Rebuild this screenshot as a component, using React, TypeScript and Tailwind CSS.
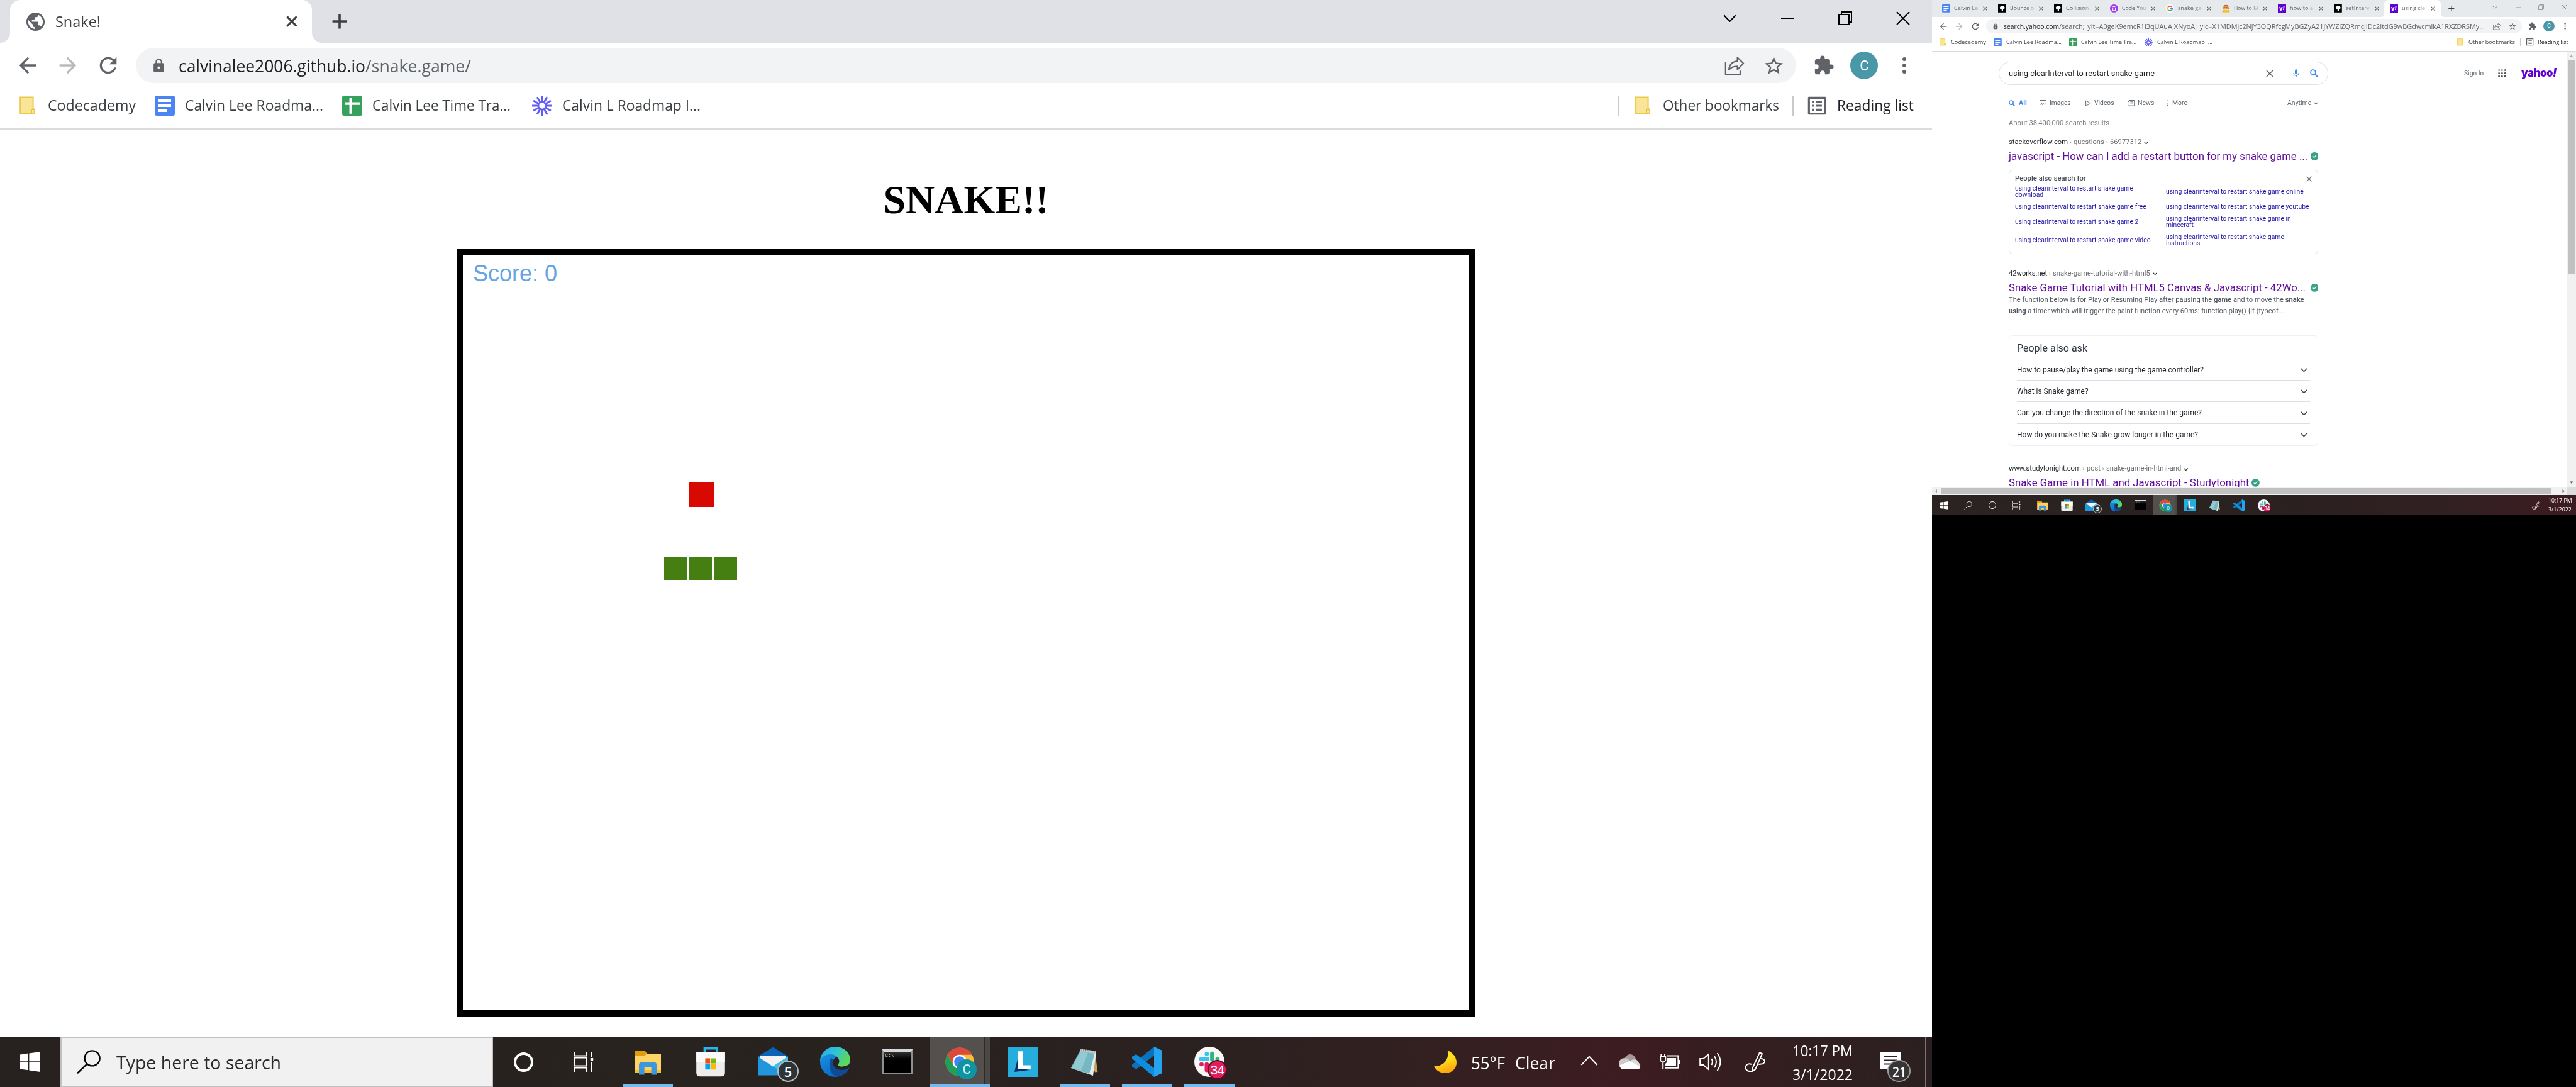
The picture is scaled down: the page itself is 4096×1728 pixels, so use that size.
import React, { useLayoutEffect, useRef, useState } from "react";
import { MdArrowBack, MdArrowForward, MdRefresh, MdLock, MdStarBorder, MdExtension, MdMic, MdListAlt, MdPublic } from "react-icons/md";

/** A single line of text, condensed or stretched to a set width. */
function T({ w, className = "", children }: { w: number; className?: string; children: React.ReactNode }) {
  const outer = useRef<HTMLSpanElement>(null);
  const inner = useRef<HTMLSpanElement>(null);
  const [scale, setScale] = useState(1);
  useLayoutEffect(() => {
    const o = outer.current!.getBoundingClientRect().width;
    const i = inner.current!.getBoundingClientRect().width;
    if (i > 0) setScale(o / i);
  }, []);
  return (
    <span ref={outer} className={"inline-block shrink-0 " + className} style={{ width: w }}>
      <span ref={inner} className="inline-block origin-left whitespace-pre" style={{ transform: `scaleX(${scale})` }}>
        {children}
      </span>
    </span>
  );
}

/* ---------- small icons ---------- */

const Folder = ({ className = "" }) => (
  <svg className={"shrink-0 " + className} width="13" height="15" viewBox="0 0 13 15">
    <path d="M.6.8h10.2v9.4h1.2v3.6H.6z" fill="#f9e596" stroke="#ecc94b" strokeWidth="1" />
    <path d="M9.6 13.8v-3.2h2" fill="none" stroke="#e3c04c" strokeWidth=".8" />
  </svg>
);
const Docs = ({ className = "" }) => (
  <svg className={"shrink-0 " + className} width="16" height="16" viewBox="0 0 16 16">
    <rect width="16" height="16" rx="1.5" fill="#4c84f3" />
    <path d="M3 4h10M3 8h10M3 12h6.5" stroke="#fff" strokeWidth="1.9" />
  </svg>
);
const Sheets = ({ className = "" }) => (
  <svg className={"shrink-0 " + className} width="16" height="16" viewBox="0 0 16 16">
    <rect width="16" height="16" rx="1.5" fill="#36a15c" />
    <path d="M2 6.3h12M6.8 2v12.4" stroke="#fff" strokeWidth="2.1" />
  </svg>
);
const Loom = ({ className = "" }) => (
  <svg className={"shrink-0 " + className} width="16" height="16" viewBox="0 0 16 16">
    <g stroke="#625df5" strokeWidth="1.5">
      {[0, 30, 60, 90, 120, 150, 180, 210, 240, 270, 300, 330].map((a) => (
        <path key={a} d="M8 0v5" transform={`rotate(${a} 8 8)`} />
      ))}
    </g>
    <circle cx="8" cy="8" r="3" fill="#fff" stroke="#625df5" strokeWidth="1.3" />
  </svg>
);
const Share = () => (
  <svg className="shrink-0" width="16" height="16" viewBox="0 0 16 16" fill="none" stroke="#5f6368" strokeWidth="1.1">
    <path d="M.9 5.4v9.7h11.6v-3" />
    <path d="M10.3 1.6v3C6 5 3.9 7.700 3.500 11.500c1.600-2 3.900-2.800 6.800-2.800v2.700l4.800-5z" strokeLinejoin="round" />
  </svg>
);
const Cross = ({ s = 9, c = "#3c4043", t = 1.5 }) => (
  <svg className="shrink-0" width={s} height={s} viewBox="0 0 9 9">
    <path d="M.7.7l7.600 7.600M8.300.7L.7 8.300" stroke={c} strokeWidth={t} />
  </svg>
);
const Plus = () => (
  <svg className="shrink-0" width="12" height="12" viewBox="0 0 12 12">
    <path d="M6 .3v11.400M.3 6h11.400" stroke="#3c4043" strokeWidth="1.8" />
  </svg>
);
const Chev = ({ s = 10, c = "#444", t = 1.3 }) => (
  <svg className="shrink-0" width={s} height={s * 0.6} viewBox="0 0 10 6">
    <path d="M.6.6L5 5.200 9.400.6" fill="none" stroke={c} strokeWidth={t} />
  </svg>
);
const Find = ({ s }: { s: number }) => (
  <svg className="shrink-0" width={s} height={s} viewBox="0 0 16 16" fill="none" stroke="#3f86f0" strokeWidth="2.200">
    <circle cx="6.200" cy="6.200" r="4.900" /><path d="M9.800 9.800l5.400 5.400" strokeWidth="2.600" />
  </svg>
);
const Verified = () => (
  <svg className="shrink-0" width="16" height="16" viewBox="0 0 16 16">
    <circle cx="8" cy="8" r="8" fill="#38a287" />
    <path d="M4.600 8.300l2.300 2.400 4.500-5.200" fill="none" stroke="#fff" strokeWidth="1.500" />
  </svg>
);

/* ---------- browser frame ---------- */

function WindowControls({ c }: { c: string }) {
  const cell = "flex h-[29px] w-[46px] items-center justify-center";
  return (
    <div className="ml-auto flex h-full items-start">
      <div className={cell}><Chev s={10.500} c={c} t={1} /></div>
      <div className={cell}><svg width="10" height="10"><path d="M0 5h10" stroke={c} /></svg></div>
      <div className={cell}>
        <svg width="11" height="11" fill="none" stroke={c}><path d="M.5 2.500h8v8h-8zM2.500 2.500v-2h8v8h-2" /></svg>
      </div>
      <div className={cell}><svg width="11" height="11"><path d="M.5.5l10 10M10.500.5l-10 10" stroke={c} /></svg></div>
    </div>
  );
}

function ActiveShape({ w, children }: { w: number; children: React.ReactNode }) {
  return (
    <div className="relative flex h-[34px] shrink-0 items-center rounded-t-[8px] bg-white" style={{ width: w }}>
      <svg className="absolute bottom-0 -left-[8px]" width="8" height="8"><path d="M8 0v8H0a8 8 0 0 0 8-8" fill="#fff" /></svg>
      <svg className="absolute bottom-0 -right-[8px]" width="8" height="8"><path d="M0 0v8h8a8 8 0 0 1-8-8" fill="#fff" /></svg>
      {children}
    </div>
  );
}

function Toolbar({ url }: { url: React.ReactNode }) {
  return (
    <div className="flex h-[36px] shrink-0 items-center gap-[12px] bg-white pl-[12px] text-[#5f6368]">
      <MdArrowBack size={20} className="shrink-0" />
      <MdArrowForward size={20} className="shrink-0 text-[#bababc]" />
      <MdRefresh size={20} className="shrink-0" />
      <div className="flex h-[28px] flex-1 items-center rounded-full bg-[#f1f3f4] pr-[9px] pl-[12px]">
        <MdLock size={12.500} className="mr-[9.500px] shrink-0" />
        <div className="flex flex-1 text-[14px] leading-none">{url}</div>
        <Share />
        <MdStarBorder size={17.500} className="ml-[14.600px] shrink-0" />
      </div>
      <div className="flex w-[96px] items-center">
        <MdExtension size={17} className="ml-[1.500px] shrink-0" />
        <div className="ml-[12.700px] flex h-[22px] w-[22px] items-center justify-center rounded-full bg-[#4a97a8] font-[Roboto] text-[11px] text-white">C</div>
        <svg className="ml-[18.700px]" width="4" height="14" fill="#5f6368"><circle cx="2" cy="2" r="1.500" /><circle cx="2" cy="7" r="1.500" /><circle cx="2" cy="12" r="1.500" /></svg>
      </div>
    </div>
  );
}

function Bookmarks() {
  return (
    <div className="flex h-[33px] shrink-0 items-center border-b border-[#dadce0] bg-white pb-[4px] pl-[15.500px] text-[12px] leading-none text-[#3c4043]">
      <Folder />
      <T w={70} className="-mt-px ml-[9.400px]">Codecademy</T>
      <Docs className="ml-[15.100px]" />
      <T w={110} className="-mt-px ml-[8.200px]">Calvin Lee Roadma...</T>
      <Sheets className="ml-[14.800px]" />
      <T w={110} className="-mt-px ml-[8.200px]">Calvin Lee Time Tra...</T>
      <Loom className="ml-[16.800px]" />
      <T w={110} className="-mt-px ml-[8.200px]">Calvin L Roadmap I...</T>
      <div className="ml-auto h-[16px] w-px bg-[#c8cacd]" />
      <Folder className="ml-[12px]" />
      <T w={92.500} className="-mt-px ml-[9.200px]">Other bookmarks</T>
      <div className="ml-[10.400px] h-[16px] w-px bg-[#c8cacd]" />
      <MdListAlt size={19} className="ml-[9px] shrink-0 text-[#5f6368]" />
      <T w={61} className="-mt-px mr-[14.700px] ml-[6.500px] text-[#202124]">Reading list</T>
    </div>
  );
}

/* ---------- taskbar icons, each 24 by 24 ---------- */

const Explorer = () => (
  <svg width="24" height="24" viewBox="0 0 24 24">
    <path d="M1.500 3h8.200l1.800 3H22.500v15H1.500z" fill="#ffd364" />
    <path d="M1.500 3h8.200l1.300 2.700-1.500 1.500h-8z" fill="#e09e0a" />
    <path d="M1.500 18.500h21v2.500h-21z" fill="#f7bd2d" />
    <path d="M5 22.200v-7.700q0-2.300 2.300-2.300h9.500q2.300 0 2.300 2.300v7.700h-4.300v-6h-5.500v6z" fill="#3d97dd" />
  </svg>
);
const Store = () => (
  <svg width="24" height="24" viewBox="0 0 24 24">
    <path d="M7.200 6V1.400h9.800V6" fill="none" stroke="#27b5ee" strokeWidth="1.800" />
    <path d="M.6 4.500h22.800v16.300q0 2.800-3 2.800H3.600q-3 0-3-2.800z" fill="#ededed" />
    <path d="M.6 4.500h22.800v8H.6z" fill="#fafafa" />
    <path d="M7.700 9.200h3.900v4.100H7.700z" fill="#f04e1f" /><path d="M12.300 9.200h3.900v4.100h-3.900z" fill="#7fba00" />
    <path d="M7.700 14h3.900v4.100H7.700z" fill="#00a4ef" /><path d="M12.300 14h3.900v4.100h-3.900z" fill="#ffb900" />
  </svg>
);
const Mail = () => (
  <div className="relative h-[24px] w-[24px]">
    <svg width="24" height="24" viewBox="0 0 24 24">
      <path d="M0 7.800L12 .4l12 7.400v2H0z" fill="#0b63b5" />
      <path d="M2 7.500h20v10H2z" fill="#f2f2f2" />
      <path d="M0 7.800l12 7.900 12-7.900v15H0z" fill="#2196dc" />
      <path d="M24 7.800v15L12 15.700z" fill="#3cc0f2" />
    </svg>
    <div className="absolute top-[11px] left-[15.600px] flex h-[17px] w-[17px] items-center justify-center rounded-full border border-[#b8b8b8] bg-[#2d3438] text-[11px] leading-none font-semibold text-white">5</div>
  </div>
);
const Edge = () => (
  <svg width="24" height="24" viewBox="0 0 24 24">
    <defs>
      <linearGradient id="eg" x1="0" y1="0" x2="1" y2=".5"><stop offset=".1" stopColor="#2aa9e8" /><stop offset=".5" stopColor="#2fc3d6" /><stop offset="1" stopColor="#5fd856" /></linearGradient>
      <linearGradient id="eb" x1="0" y1="0" x2=".5" y2="1"><stop offset="0" stopColor="#1b9be6" /><stop offset="1" stopColor="#0a68c8" /></linearGradient>
    </defs>
    <circle cx="12" cy="12" r="12" fill="url(#eb)" />
    <path d="M0 11.600C.3 5 5.300 0 12 0c7.200 0 12 5.200 12 10.200 0 3.600-2.800 5.800-6 5.800-2.300 0-3.800-.8-3.800-1.600 0-.7 1-1.100 1-2.900 0-2.900-3.200-5.500-7-5.500C4 6 .8 8.600 0 11.600z" fill="url(#eg)" />
    <path d="M9 9c-3 3.500-1.500 14.300 5 14.800 4-.6 7-3.300 8.300-6.300.2-.6-.3-.6-.7-.4-4.800 2.600-12.500.5-11.600-5.100C10.200 11 10 9.500 9 9z" fill="#0e4b96" />
    <path d="M14.200 14.400c0-.7 1-1.100 1-2.900 0-1.300-.8-2.500-2-3.400-1.800.9-3.700 2.900-3.200 5.400.6 3.500 4.800 5.300 8.300 4.900 2-.2 4.200-1.200 5.500-2.400l.2-2.500C22 15.600 14.200 17 14.200 14.400z" fill="#282120" />
  </svg>
);
const Cmd = () => (
  <div className="h-[20px] w-[24px] border border-t-[2px] border-[#8c8f93] border-t-[#d6d7da] bg-linear-to-b from-[#353535] to-black to-50% pl-[1px] font-[Liberation_Mono] text-[4px] leading-[6px] text-[#dddddd]">C:\_</div>
);
const Chrome = () => (
  <div className="relative h-[24px] w-[24px]">
    <svg width="24" height="24" viewBox="0 0 24 24">
      <circle cx="12" cy="12" r="11.300" fill="#fbc02f" />
      <path d="M2.200 6.350A11.300 11.300 0 0 1 21.800 6.350H12A5.650 5.650 0 0 0 7.100 14.800z" fill="#dc4a3d" />
      <path d="M2.200 6.350A11.300 11.300 0 0 0 12 23.300L16.900 14.800a5.650 5.650 0 0 1-9.800 0z" fill="#1f9f57" />
      <circle cx="12" cy="12" r="5.600" fill="#fff" /><circle cx="12" cy="12" r="4.400" fill="#4483f0" />
    </svg>
    <div className="absolute top-[10px] left-[9.500px] flex h-[16px] w-[16px] items-center justify-center rounded-full bg-[#0e94a3] font-[Roboto] text-[10px] leading-none font-medium text-[#d4f0f2]">C</div>
  </div>
);
const Lapp = () => (
  <svg width="24" height="24" viewBox="0 0 24 24">
    <path d="M0 0h24v24H0z" fill="#27addb" /><path d="M8.300 9L5.500 20l12-1.500L9 17z" fill="#0b2f68" />
    <path d="M8.200 3.600h4v11.200h6.200V18H8.200z" fill="#fff" />
  </svg>
);
const Notepad = () => (
  <svg width="24" height="24" viewBox="0 0 24 24">
    <path d="M20 4.500l2.200 15.500-2 .3-3-5z" fill="#c5a25c" />
    <path d="M8.500 2.500L21 4l-2.500 19L4 18z" fill="#e4eeee" />
    <path d="M8.500 2.500L20 4.500l-4.500 17L.8 17z" fill="#75b8c3" />
    <path d="M8.500 4l6 1L9 19l-7.500-2z" fill="#a8d9dd" opacity=".55" />
    <path d="M8.500 2.800L21 4.500" stroke="#c9c9c4" strokeWidth="2.200" strokeDasharray=".8 .6" />
  </svg>
);
const VSCode = () => (
  <svg width="24" height="24" viewBox="0 0 24 24">
    <path d="M17.500 0L24 3v18l-6.500 3z" fill="#26a3ee" />
    <path d="M17.500 0v7L3.200 18 0 15.800v-1.500z" fill="#0a73bb" />
    <path d="M17.500 24v-7L3.200 6 0 7.900v1.500z" fill="#0f8cdb" />
  </svg>
);
const Slack = () => (
  <div className="relative h-[24px] w-[24px] rounded-full bg-[#f7f7f7]">
    <svg width="24" height="24" viewBox="0 0 24 24" strokeWidth="3.300" strokeLinecap="round">
      <path d="M5.500 9.800h4.800M9.900 5.600v.1" stroke="#36c5f0" /><path d="M14.200 5.500v4.600M18.400 9.800h.1" stroke="#2eb67d" />
      <path d="M9.900 14v4.600M5.700 14h.1" stroke="#e01e5a" /><path d="M14 14h4.500" stroke="#ecb22e" />
    </svg>
    <div className="absolute top-[10.500px] left-[10.500px] flex h-[15.500px] w-[15.500px] items-center justify-center rounded-full border border-[#5c0a28] bg-[#e01e5a] font-[Liberation_Sans] text-[10.500px] leading-none tracking-tight text-white">34</div>
  </div>
);

const apps = [
  { Icon: Explorer, open: true }, { Icon: Store }, { Icon: Mail }, { Icon: Edge }, { Icon: Cmd },
  { Icon: Chrome, open: true, active: true }, { Icon: Lapp }, { Icon: Notepad, open: true },
  { Icon: VSCode, open: true }, { Icon: Slack, open: true },
];

const Apps = ({ wide = false }) => (
  <div className={"flex h-[40px] " + (wide ? "ml-[3.200px] gap-[1.600px]" : "ml-[3px] gap-[1px]")}>
    {apps.map(({ Icon, open, active }, i) => (
      <div key={i} className={"relative flex h-[40px] w-[48px] items-center justify-center " + (active ? "bg-[#54504e]" : "")}>
        {active && <div className="absolute top-0 right-0 h-full w-[5px] border-l border-[#2f2b2a] bg-[#4c4846]" />}
        {open && <div className={"absolute bottom-0 h-[2px] bg-[#76b9ed] " + (active ? "inset-x-0" : "inset-x-[4px]")} />}
        <Icon />
      </div>
    ))}
  </div>
);

const cell = "flex h-[40px] w-[48px] shrink-0 items-center justify-center";
const Start = () => (
  <div className={cell}>
    <svg width="16" height="16" viewBox="0 0 16 16" fill="#fff"><path d="M0 2.200l6.500-.9v6.300H0zM7.200 1.200L16 0v7.600H7.200zM0 8.300h6.500v6.300L0 13.700zM7.200 8.300H16V16l-8.800-1.200z" /></svg>
  </div>
);
const Cortana = () => <div className={cell}><div className="h-[15.500px] w-[15.500px] rounded-full border-2 border-white" /></div>;
const TaskView = () => (
  <div className={cell}>
    <svg width="16" height="16" viewBox="0 0 16 16" fill="none" stroke="#fff"><path d="M.5 0v3.200h10V0M.5 16v-3.200h10V16M.5 4.700h10v6.500H.5zM14.500 0v4M14.500 8.500V16" /><path d="M14.500 5v2.500" strokeWidth="2.200" /></svg>
  </div>
);
const Lens = ({ s, c }: { s: number; c: string }) => (
  <svg className="shrink-0" width={s} height={s} viewBox="0 0 19 19" fill="none" stroke={c} strokeWidth="1.200"><circle cx="12.300" cy="6.700" r="6" /><path d="M8.200 11.200L.5 18.600" /></svg>
);
const Pen = () => (
  <svg className="shrink-0" width="17" height="16" viewBox="0 0 17 16" fill="none" stroke="#fff" strokeWidth="1">
    <path d="M12 .6l2 1L8.500 14l-2 1.300L6.300 13z" /><path d="M6 15.300c-3.500 1-6-1.300-5-4 .8-1.800 3-2 4.500-1.300M12.500 5.500c3.500-.2 4.800 2.800 2 4-1.500.6-3 .3-3.500.6" />
  </svg>
);

/* ---------- the two screens ---------- */

function SnakeScreen() {
  return (
    <div className="flex h-[864px] w-[1536px] shrink-0 flex-col bg-white [zoom:2]">
      <div className="flex h-[34px] shrink-0 items-center bg-[#dfe1e6] pl-[8px]">
        <ActiveShape w={240}>
          <MdPublic size={17.500} className="ml-[11.300px] text-[#5f6368]" />
          <T w={36} className="-mt-[.500px] ml-[7.200px] text-[12px] leading-none text-[#3c4043]">Snake!</T>
          <div className="mr-[11.500px] ml-auto flex"><Cross /></div>
        </ActiveShape>
        <div className="ml-[16px] flex"><Plus /></div>
        <WindowControls c="#000" />
      </div>
      <Toolbar url={<><T w={148.500} className="text-[#202124]">calvinalee2006.github.io</T><T w={84}>/snake.game/</T></>} />
      <Bookmarks />
      <div className="flex flex-1 flex-col items-center">
        <h1 className="mt-[37.300px] font-[Liberation_Serif] text-[32px] leading-[37px] font-bold text-black">SNAKE!!</h1>
        <div className="relative mt-[20.900px] h-[610px] w-[810px] border-[5px] border-black">
          <div className="absolute top-[5.500px] left-[8px] font-[Liberation_Sans] text-[18px] leading-none text-[#64a4e4]">Score: 0</div>
          <div className="absolute top-[180px] left-[180px] h-[20px] w-[20px] bg-[#d70900]" />
          <div className="absolute top-[240px] left-[160px] h-[18px] w-[18px] bg-[#467f11]" />
          <div className="absolute top-[240px] left-[180px] h-[18px] w-[18px] bg-[#467f11]" />
          <div className="absolute top-[240px] left-[200px] h-[18px] w-[18px] bg-[#467f11]" />
        </div>
      </div>
      <div className="flex h-[40px] shrink-0 items-center bg-[linear-gradient(90deg,#272120_0%,#28231f_35%,#2a2120_60%,#332021_74%,#3d1c20_84%,#351e20_90%,#2b2021_100%)] text-white">
        <Start />
        <div className="flex h-[40px] w-[344px] items-center border border-[#c0c0c0] bg-[#f1f1f1] pl-[12px] text-[#2b2b2b]">
          <Lens s={19} c="#000" />
          <T w={131} className="mt-px ml-[12.400px] text-[15px] leading-none">Type here to search</T>
        </div>
        <Cortana />
        <TaskView />
        <Apps wide />
        <svg className="ml-[154.500px] shrink-0" width="18" height="18" viewBox="0 0 18 18">
          <defs><linearGradient id="mn" x1=".3" y1="0" x2=".6" y2="1"><stop offset=".4" stopColor="#ffe21a" /><stop offset="1" stopColor="#ff9f10" /></linearGradient></defs>
          <path d="M10.800 0C15.500 1.800 18 5.800 18 9.600 18 14.500 14.200 18 9 18 5 18 1.500 16 0 12.300c6.800.8 12.600-4.800 10.800-12.300z" fill="url(#mn)" />
        </svg>
        <T w={27} className="mt-px ml-[11.500px] text-[14px] leading-none">55°F</T>
        <T w={32} className="mt-px ml-[8px] text-[14px] leading-none">Clear</T>
        <svg className="-mt-[2px] ml-[20px] shrink-0" width="14" height="8"><path d="M.7 7.500L7 .8l6.300 6.700" fill="none" stroke="#fff" /></svg>
        <svg className="ml-[17px] shrink-0" width="17" height="12" viewBox="0 0 17 12">
          <circle cx="8.500" cy="4.500" r="4.500" fill="#a59a9a" /><path d="M4 3.200a4 4 0 0 1 4.500 2.500l-7 5.300A4.200 4.200 0 0 1 4 3.200z" fill="#cfcaca" />
          <path d="M2.500 12c-1.500-.5-2.300-1.800-2.200-3.300L8.500 5.200l7.500 4c.6 1.300 0 2.500-1.300 2.800z" fill="#fff" /><path d="M8.500 5.500C10 3.300 15 3.500 15.500 7c1 .5 1.300 1.500 1 2.600z" fill="#dedada" />
        </svg>
        <svg className="-mt-px ml-[15px] shrink-0" width="17" height="12" viewBox="0 0 17 12" fill="none" stroke="#fff">
          <path d="M1.200 0v2.500M4 0v2.500M.6 2.500h4v3q-2 2.500-4 0zM2.600 7v5M6 1.700h8.700v9.700H4.500M15.900 5v3" /><path d="M6 3.500h7v6H4.500V8L6 6.500z" fill="#fff" stroke="none" />
        </svg>
        <svg className="ml-[14.500px] shrink-0" width="18" height="16" viewBox="0 0 18 16" fill="none" stroke="#fff">
          <path d="M.6 5.500h2.600L7.400 2v12L3.200 10.500H.6zM9.700 5.500q1.500 2.500 0 5M12 3.500q3 4.500 0 9M14.300 1q4.800 7 0 14" />
        </svg>
        <div className="ml-[18px] flex"><Pen /></div>
        <div className="mt-[.500px] ml-[21px] flex flex-col text-[12px] leading-[19px]">
          <T w={48}>10:17 PM</T>
          <T w={48}>3/1/2022</T>
        </div>
        <div className="relative ml-[21.500px] h-[16px] w-[17px]">
          <svg width="17" height="16" viewBox="0 0 17 16"><path d="M0 0h16.500v13.500H8L5.500 16v-2.500H0z" fill="#fff" /><path d="M3 3.500h10.500M3 6.700h10.500M3 9.800h7" stroke="#2b2021" strokeWidth="1" /></svg>
          <div className="absolute top-[6.500px] left-[6px] flex h-[17.500px] w-[18.500px] items-center justify-center rounded-full border border-[#9a9a9a] bg-[#363434] text-[11px] leading-none font-semibold"><T w={11}>21</T></div>
        </div>
        <div className="mr-[4.500px] ml-auto h-full w-px bg-[#7a7273]" />
      </div>
    </div>
  );
}

const YFav = () => <div className="flex h-[16px] w-[16px] items-center justify-center bg-[#6001d2] font-[Inter] text-[11px] leading-none font-extrabold text-white">y<i>!</i></div>;
const Blob = () => (
  <svg width="16" height="16" viewBox="0 0 16 16"><path d="M0 0h16v16H0z" /><path d="M3 6.500Q4.500 3 9 3.500q4 0 4.500 3.500L12 9.500 10 9.700V13H7.500L7 10 4.500 9.500z" fill="#fff" /></svg>
);
const Udemy = () => (
  <svg width="16" height="16" viewBox="0 0 16 16"><circle cx="8" cy="8" r="8" fill="#a435f0" /><path d="M5.300 7.500v3.200q0 2 2.700 2t2.700-2V7.500M8 11V6M5.500 5.200L8 3.200l2.500 2" fill="none" stroke="#fff" strokeWidth="1.400" /></svg>
);
const GFav = () => (
  <svg width="16" height="16" viewBox="0 0 16 16" fill="none" strokeWidth="2.200">
    <circle cx="8" cy="8" r="8" fill="#fff" />
    <path d="M3.900 5.500A4.800 4.800 0 0 1 11.600 4.800" stroke="#ea4335" /><path d="M3.900 5.500a4.800 4.800 0 0 0 0 5" stroke="#fbbc05" />
    <path d="M3.900 10.500a4.800 4.800 0 0 0 7.300 1.100" stroke="#34a853" /><path d="M11.200 11.600A4.800 4.800 0 0 0 12.800 8H8" stroke="#4285f4" />
  </svg>
);
const Person = () => (
  <svg width="16" height="16" viewBox="0 0 16 16"><path d="M3 5q0-4 5-4t5 4l1 5H3z" fill="#b5651d" /><circle cx="8" cy="6.500" r="3.500" fill="#eda75a" /><path d="M.5 16Q0 11 4 11h8q4 0 3.500 5z" fill="#fbc02d" /><path d="M5.500 6h1.500M9 6h1.500" stroke="#4a2a10" /></svg>
);
const DocFav = () => <Docs />;

const tabs = [
  { Icon: DocFav, t: "Calvin Le", w: 48 }, { Icon: Blob, t: "Bounce o", w: 48 }, { Icon: Blob, t: "Collision", w: 45.500 }, { Icon: Udemy, t: "Code You", w: 48.500 },
  { Icon: GFav, t: "snake ga", w: 46.500 }, { Icon: Person, t: "How to M", w: 48.500 }, { Icon: YFav, t: "how to a", w: 46.500 }, { Icon: Blob, t: "setInterv", w: 47 },
];

function TabBody({ Icon, t, w }: { Icon: React.ComponentType; t: string; w: number }) {
  return (
    <>
      <div className="ml-[11px] h-[16px] w-[16px] shrink-0"><Icon /></div>
      <div className="ml-[8px] w-[49px] text-[12px] leading-[18px] text-[#5f6368] mask-[linear-gradient(90deg,#000_65%,transparent_110%)]"><T w={w}>{t}</T></div>
      <div className="ml-[8px] flex"><Cross c="#55585c" /></div>
    </>
  );
}

function Crumbs({ parts }: { parts: [string, number][] }) {
  return (
    <div className="flex h-[20px] items-center pt-px text-[14px] leading-[20px] text-[#6b6e73]">
      {parts.map(([s, w], i) => (
        <React.Fragment key={s}>
          {i > 0 && <span className="w-[11.500px] text-center text-[12px]">›</span>}
          <T w={w} className={i === 0 ? "text-[#1d2228]" : ""}>{s}</T>
        </React.Fragment>
      ))}
      <span className="mt-[2px] ml-[5px] flex"><Chev s={9} c="#222" t={1.600} /></span>
    </div>
  );
}

const Title = ({ w, gap, children }: { w: number; gap: number; children: string }) => (
  <div className="mt-[6px] flex h-[24px] items-center text-[20px] leading-[24px] text-[#5f0a9c]">
    <T w={w} className="mt-px">{children}</T>
    <span className="mt-[2px] flex" style={{ marginLeft: gap }}><Verified /></span>
  </div>
);

const base = "using clearinterval to restart snake game";
const related: { l: [string, number][]; r: [string, number][]; h: string }[] = [
  { l: [[base, 235], ["download", 56.500]], r: [[base + " online", 273.500]], h: "h-[36px]" },
  { l: [[base + " free", 261]], r: [[base + " youtube", 284.500]], h: "h-[24px]" },
  { l: [[base + " 2", 245.500]], r: [[base + " in", 248.500], ["minecraft", 55]], h: "h-[36px]" },
  { l: [[base + " video", 269.500]], r: [[base, 235], ["instructions", 68]], h: "h-[36px]" },
];

const questions: [string, number][] = [
  ["How to pause/play the game using the game controller?", 371],
  ["What is Snake game?", 142],
  ["Can you change the direction of the snake in the game?", 367.500],
  ["How do you make the Snake grow longer in the game?", 360],
];

function Results() {
  return (
    <div className="ml-[152px] w-[616px] pt-[10px]">
      <div className="flex h-[20px] items-center pt-px text-[14px] leading-[20px] text-[#7b7e84]"><T w={200}>About 38,400,000 search results</T></div>
      <div className="mt-[17px]"><Crumbs parts={[["stackoverflow.com", 117.500], ["questions", 61], ["66977312", 63]]} /></div>
      <Title w={594} gap={6}>javascript - How can I add a restart button for my snake game ...</Title>
      <div className="mt-[15px] h-[168px] rounded-[8px] border border-[#dcdde0] pr-[11px] pl-[11.500px]">
        <div className="flex h-[25px] items-center pt-[9px] text-[14px] leading-[18px] font-medium text-[#464e56]">
          <T w={141}>People also search for</T>
          <span className="mt-px ml-auto flex"><Cross s={11.500} c="#6b6e73" t={1} /></span>
        </div>
        {related.map(({ l, r, h }, i) => (
          <div key={i} className={"grid grid-cols-[300px_1fr] items-center text-[13px] leading-[12px] text-[#2015a8] " + h}>
            {[l, r].map((lines, j) => (
              <div key={j} className="flex flex-col">{lines.map(([s, w]) => <T key={s} w={w}>{s}</T>)}</div>
            ))}
          </div>
        ))}
      </div>
      <div className="mt-[28px]"><Crumbs parts={[["42works.net", 76.500], ["snake-game-tutorial-with-html5", 193.500]]} /></div>
      <Title w={590} gap={10}>Snake Game Tutorial with HTML5 Canvas &amp; Javascript - 42Wo...</Title>
      <div className="mt-[2px] flex flex-col text-[14px] leading-[22px] text-[#4f565e]">
        <T w={587}>The function below is for Play or Resuming Play after pausing the <b>game</b> and to move the <b>snake</b></T>
        <T w={547}><b>using</b> a timer which will trigger the paint function every 60ms: function play() {"{"}if (typeof...</T>
      </div>
      <div className="mt-[37px] h-[220px] rounded-[8px] border border-[#eeeff2] px-[16px]">
        <div className="flex h-[46px] items-center pt-[5px] text-[20px] leading-none text-[#2c363f]"><T w={140}>People also ask</T></div>
        {questions.map(([q, w], i) => (
          <div key={q} className={"flex h-[43px] items-center pt-[2px] text-[16px] leading-none text-[#1d2228] " + (i < 3 ? "border-b border-[#dcdee1]" : "")}>
            <T w={w}>{q}</T>
            <span className="mr-[5px] ml-auto flex"><Chev s={13.500} c="#444b52" t={1.400} /></span>
          </div>
        ))}
      </div>
      <div className="mt-[35px]"><Crumbs parts={[["www.studytonight.com", 143.500], ["post", 27.500], ["snake-game-in-html-and", 149]]} /></div>
      <Title w={478} gap={5}>Snake Game in HTML and Javascript - Studytonight</Title>
    </div>
  );
}

function SearchScreen() {
  return (
    <div className="flex h-[1024px] w-[1280px] shrink-0 flex-col bg-white [zoom:0.8]">
      <div className="flex h-[34px] shrink-0 items-center bg-[#e7eaed] pl-[9px]">
        {tabs.map((tab, i) => (
          <div key={i} className="relative flex h-full w-[111.250px] shrink-0 items-center">
            <TabBody {...tab} />
            {i < 7 && <div className="absolute top-[7px] right-0 h-[20px] w-px bg-[#8b8e92]" />}
          </div>
        ))}
        <ActiveShape w={112}><TabBody Icon={YFav} t="using cle" w={46.500} /></ActiveShape>
        <div className="ml-[15.500px] flex"><Plus /></div>
        <WindowControls c="#77797c" />
      </div>
      <Toolbar
        url={<><T w={110} className="text-[#202124]">search.yahoo.com</T><T w={846}>/search;_ylt=A0geK9emcR1i3qUAuAJXNyoA;_ylc=X1MDMjc2NjY3OQRfcgMyBGZyA21jYWZlZQRmcjIDc2ItdG9wBGdwcmlkA1RXZDRSMy...</T></>}
      />
      <Bookmarks />
      <div className="flex h-[864px] shrink-0 font-[Roboto]">
        <div className="h-[864px] w-[1263px] overflow-hidden">
          <div className="flex h-[86px] items-center pl-[132px]">
            <div className="flex h-[46px] w-[656px] items-center rounded-full border border-[#dfe1e5] pr-[19px] pl-[19px] text-[16px] leading-none text-[#1d2228]">
              <T w={290} className="mt-px">using clearInterval to restart snake game</T>
              <span className="ml-auto flex"><Cross s={15} c="#5b636a" t={1.100} /></span>
              <div className="ml-[16.500px] h-[28px] w-px bg-[#dfe1e5]" />
              <MdMic size={20} className="mr-[18px] ml-[18px] text-[#3f86f0]" />
              <Find s={16} />
            </div>
            <T w={39} className="ml-[270px] text-[14px] leading-none text-[#5b636a]">Sign In</T>
            <svg className="ml-[28px] shrink-0" width="16" height="16" fill="#4a4f55">
              {[2, 8, 14].map((y) => [2, 8, 14].map((x) => <circle key={x + "-" + y} cx={x} cy={y} r="1.700" />))}
            </svg>
            <T w={70} className="-mt-[5px] ml-[30px] font-[Inter] text-[23px] leading-none font-black tracking-tight text-[#6001d2]">yahoo<i>!</i></T>
          </div>
          <div className="flex h-[36px] border-b border-[#dfe1e5] pl-[140px] text-[14px] leading-none text-[#5b636a]">
            <div className="flex h-[36px] w-[60px] items-center border-b-[2px] border-[#3f86f0] pb-[3px] pl-[12px] font-bold text-[#3f86f0]"><Find s={13} /><T w={16} className="ml-[7px]">All</T></div>
            <div className="flex h-[30px] items-center pt-[2px]">
              <svg className="ml-[14px]" width="14" height="13" fill="none" stroke="#5b636a" strokeWidth="1.200"><path d="M.6.6h12.800v11.600H.6zM.6 10l3.500-4 3 5M6 8.500L9.500 5l4 5" /></svg>
              <T w={42} className="ml-[6px]">Images</T>
              <svg className="ml-[29px]" width="11" height="13" fill="none" stroke="#5b636a" strokeWidth="1.200"><path d="M.8 1.200l9.400 5.300-9.400 5.300z" /></svg>
              <T w={39.500} className="ml-[7px]">Videos</T>
              <svg className="ml-[26px]" width="14" height="12" fill="none" stroke="#5b636a" strokeWidth="1.200"><path d="M3 .6h10.400v10.800H2q-1.400 0-1.400-1.500V3H3zM3 3v7M5.500 3.500h5.500M5.500 6h5.500" /></svg>
              <T w={33} className="ml-[6px]">News</T>
              <svg className="ml-[26px]" width="3" height="12" fill="#2c363f"><circle cx="1.500" cy="1.500" r="1.100" /><circle cx="1.500" cy="6" r="1.100" /><circle cx="1.500" cy="10.500" r="1.100" /></svg>
              <T w={30} className="ml-[7px]">More</T>
              <T w={48} className="ml-[199px]">Anytime</T>
              <span className="ml-[5px] flex"><Chev s={9} c="#5b636a" t={1.400} /></span>
            </div>
          </div>
          <Results />
        </div>
        <div className="flex h-full w-[17px] flex-col items-center justify-between bg-[#f1f1f1]">
          <div className="flex flex-col items-center">
            <svg width="17" height="17"><path d="M5 11h7L8.500 7z" fill="#a3a3a3" /></svg>
            <div className="h-[424px] w-[13px] bg-[#c1c1c1]" />
          </div>
          <svg width="17" height="17"><path d="M5 7h7l-3.500 4z" fill="#505050" /></svg>
        </div>
      </div>
      <div className="flex h-[17px] shrink-0 items-center bg-[#f1f1f1]">
        <svg width="17" height="17"><path d="M10 5v7L6 8.500z" fill="#a3a3a3" /></svg>
        <div className="h-[13px] w-[1213px] bg-[#c1c1c1]" />
        <svg className="ml-[16px]" width="17" height="17"><path d="M7 5v7l4-3.500z" fill="#505050" /></svg>
        <div className="h-[17px] w-[17px] bg-[#dcdcdc]" />
      </div>
      <div className="flex h-[40px] shrink-0 items-center bg-[linear-gradient(90deg,#2a2321_0%,#2a2220_45%,#2c2020_60%,#322022_82%,#3c1b21_97%,#3a1c22_100%)] text-white">
        <Start />
        <div className={cell}><Lens s={16} c="#fff" /></div>
        <Cortana />
        <TaskView />
        <Apps />
        <div className="ml-auto flex"><Pen /></div>
        <div className="mr-[8px] ml-[16px] flex flex-col text-[12px] leading-[18px]">
          <T w={47}>10:17 PM</T>
          <T w={46}>3/1/2022</T>
        </div>
      </div>
    </div>
  );
}

export default function App() {
  return (
    <div className="flex h-[1728px] w-[4096px] items-start overflow-hidden bg-black font-['Open_Sans',sans-serif]">
      <SnakeScreen />
      <SearchScreen />
    </div>
  );
}
